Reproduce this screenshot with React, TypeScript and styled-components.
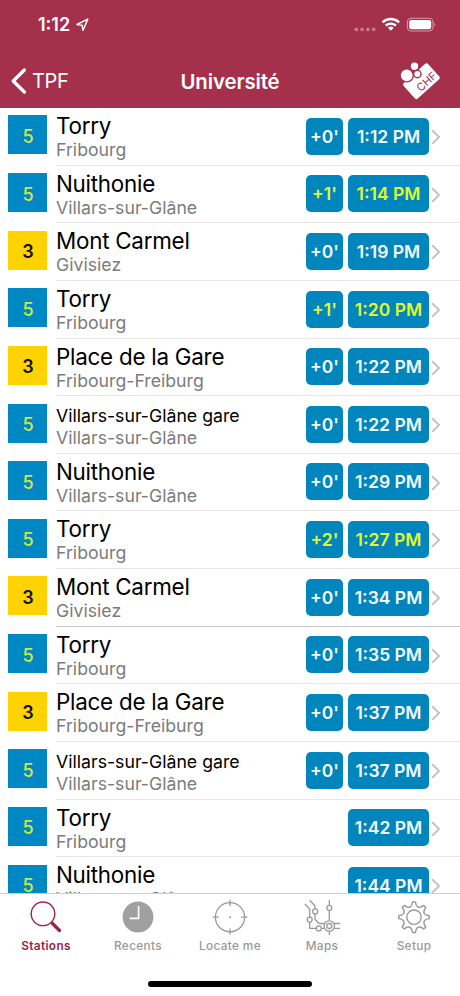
import React from "react";
import styled, { createGlobalStyle } from "styled-components";

const GlobalStyle = createGlobalStyle`
  * { box-sizing: border-box; }
  body { margin: 0; background: #fff; }
`;

const Screen = styled.div`
  width: 460px;
  height: 996px;
  overflow: hidden;
  display: flex;
  flex-direction: column;
  background: #fff;
  font-family: Inter, "Liberation Sans", sans-serif;
  color: #000;
`;

const Header = styled.header`
  height: 108px;
  flex: none;
  background: #a5304b;
  color: #fff;
`;

const StatusBar = styled.div`
  height: 50px;
  padding: 0 23px 0 38px;
  display: flex;
  align-items: center;
  justify-content: space-between;
`;

const Clock = styled.div`
  display: flex;
  align-items: center;
  gap: 6px;
  font-size: 18px;
  line-height: 20px;
  font-weight: 600;
  letter-spacing: 0;
`;

const StatusIcons = styled.div`
  display: flex;
  align-items: center;
`;

const NavBar = styled.div`
  height: 58px;
  padding: 4px 19px 0 10px;
  display: grid;
  grid-template-columns: 1fr auto 1fr;
  align-items: center;
`;

const BackButton = styled.div`
  display: flex;
  align-items: center;
  gap: 5px;
  font-size: 20px;
  letter-spacing: -0.3px;
`;

const NavTitle = styled.h1`
  margin: 2px 0 0 9px;
  font-size: 20.4px;
  line-height: 24px;
  font-weight: 600;
  letter-spacing: -0.1px;
`;

const NavAction = styled.div`
  display: flex;
  justify-content: flex-end;
`;

const List = styled.main`
  height: 785px;
  flex: none;
  overflow: hidden;
`;

const Row = styled.div`
  height: 57.63px;
  padding-left: 8px;
  display: flex;
`;

const LineBadge = styled.div<{ $yellow: boolean }>`
  width: 39px;
  height: 39px;
  margin: 7.4px 9px 0 0;
  flex: none;
  padding: 3px 0 0 1px;
  display: flex;
  align-items: center;
  justify-content: center;
  background: ${(p) => (p.$yellow ? "#ffd300" : "#0088c4")};
  color: ${(p) => (p.$yellow ? "#111" : "#d0e83a")};
  font-size: 18px;
  font-weight: ${(p) => (p.$yellow ? 600 : 500)};
`;

const RowBody = styled.div<{ $strong: boolean }>`
  flex: 1;
  display: flex;
  border-bottom: 1px solid ${(p) => (p.$strong ? "#c8c8c8" : "#e7e7e7")};
`;

const Names = styled.div`
  flex: 1;
  white-space: nowrap;
`;

const Destination = styled.div<{ $small: boolean }>`
  height: 27px;
  padding-top: ${(p) => (p.$small ? "6px" : "4px")};
  line-height: 27px;
  font-size: ${(p) => (p.$small ? "17.7px" : "22.4px")};
  letter-spacing: ${(p) => (p.$small ? "0" : "-0.25px")};
`;

const Town = styled.div`
  padding-top: 5px;
  line-height: 20px;
  font-size: 17.7px;
  letter-spacing: 0;
  color: #7c7c7c;
`;

const Times = styled.div`
  display: flex;
  gap: 5px;
  padding-top: 9.7px;
`;

const Pill = styled.div<{ $width: number; $late: boolean }>`
  width: ${(p) => p.$width}px;
  height: 37px;
  border-radius: 5px;
  display: flex;
  align-items: center;
  justify-content: center;
  white-space: nowrap;
  background: #0085bd;
  color: ${(p) => (p.$late ? "#e2fa2b" : "#f4fbff")};
  font-size: 17.5px;
  font-weight: 600;
`;

const Disclosure = styled.svg`
  width: 10px;
  height: 16px;
  margin: 21px 0 0 2px;
`;

const RowEnd = styled.div`
  width: 31px;
  display: flex;
`;

const TabBar = styled.nav`
  height: 103px;
  flex: none;
  border-top: 1px solid #cfcfcf;
  background: #fff;
  display: flex;
  flex-direction: column;
  align-items: center;
`;

const Tabs = styled.div`
  width: 100%;
  height: 87px;
  display: grid;
  grid-template-columns: repeat(5, 1fr);
`;

const Tab = styled.div<{ $active: boolean }>`
  display: flex;
  flex-direction: column;
  align-items: center;
  padding-top: 5px;
  color: ${(p) => (p.$active ? "#9b2547" : "#999")};
  font-size: 11.8px;
  line-height: 16px;
  font-weight: ${(p) => (p.$active ? 600 : 500)};
  letter-spacing: 0.35px;
  white-space: nowrap;
  svg { display: block; margin-bottom: 1px; }
`;

const HomeIndicator = styled.div`
  width: 164px;
  height: 6px;
  border-radius: 3px;
  background: #000;
`;

type Departure = { line: number; to: string; town: string; delay?: number; time: string; small?: boolean };

const departures: Departure[] = [
  { line: 5, to: "Torry", town: "Fribourg", delay: 0, time: "1:12 PM" },
  { line: 5, to: "Nuithonie", town: "Villars-sur-Glâne", delay: 1, time: "1:14 PM" },
  { line: 3, to: "Mont Carmel", town: "Givisiez", delay: 0, time: "1:19 PM" },
  { line: 5, to: "Torry", town: "Fribourg", delay: 1, time: "1:20 PM" },
  { line: 3, to: "Place de la Gare", town: "Fribourg-Freiburg", delay: 0, time: "1:22 PM" },
  { line: 5, to: "Villars-sur-Glâne gare", town: "Villars-sur-Glâne", delay: 0, time: "1:22 PM", small: true },
  { line: 5, to: "Nuithonie", town: "Villars-sur-Glâne", delay: 0, time: "1:29 PM" },
  { line: 5, to: "Torry", town: "Fribourg", delay: 2, time: "1:27 PM" },
  { line: 3, to: "Mont Carmel", town: "Givisiez", delay: 0, time: "1:34 PM" },
  { line: 5, to: "Torry", town: "Fribourg", delay: 0, time: "1:35 PM" },
  { line: 3, to: "Place de la Gare", town: "Fribourg-Freiburg", delay: 0, time: "1:37 PM" },
  { line: 5, to: "Villars-sur-Glâne gare", town: "Villars-sur-Glâne", delay: 0, time: "1:37 PM", small: true },
  { line: 5, to: "Torry", town: "Fribourg", time: "1:42 PM" },
  { line: 5, to: "Nuithonie", town: "Villars-sur-Glâne", time: "1:44 PM" },
];

const DepartureRow = ({ d, strong }: { d: Departure; strong: boolean }) => {
  const late = (d.delay ?? 0) > 0;
  return (
    <Row>
      <LineBadge $yellow={d.line === 3}>{d.line}</LineBadge>
      <RowBody $strong={strong}>
        <Names>
          <Destination $small={!!d.small}>{d.to}</Destination>
          <Town>{d.town}</Town>
        </Names>
        <Times>
          {d.delay !== undefined && (
            <Pill $width={37} $late={late}>{`+${d.delay}'`}</Pill>
          )}
          <Pill $width={81} $late={late}>{d.time}</Pill>
        </Times>
        <RowEnd>
          <Disclosure viewBox="0 0 10 16" fill="none" stroke="#c3c3c6" strokeWidth="2">
            <path d="M1.2 1.2 L8 8 L1.2 14.8" />
          </Disclosure>
        </RowEnd>
      </RowBody>
    </Row>
  );
};

const SearchIcon = () => (
  <svg width="36" height="38" viewBox="0 0 36 38" fill="none" stroke="currentColor">
    <circle cx="15" cy="14.8" r="11.8" strokeWidth="1.4" />
    <path d="M23 23 L25 25" strokeWidth="1.5" />
    <path d="M24.5 24.5 L31.5 31.5" strokeWidth="3.4" strokeLinecap="round" />
  </svg>
);

const ClockIcon = () => (
  <svg width="36" height="38" viewBox="0 0 36 38" fill="none">
    <circle cx="18" cy="18" r="15.4" fill="#a0a0a0" />
    <path d="M18.6 7 V19.4 H9.6" stroke="#fff" strokeWidth="1.6" />
  </svg>
);

const TargetIcon = () => (
  <svg width="36" height="38" viewBox="0 0 36 38" fill="none" stroke="currentColor" strokeWidth="1.3">
    <circle cx="18" cy="18.2" r="14.6" />
    <path d="M18 0.8 V7 M18 29.4 V35.6 M0.6 18.2 H6.8 M29.2 18.2 H35.4" />
    <circle cx="18" cy="18.2" r="1" fill="currentColor" stroke="none" />
  </svg>
);

const MapIcon = () => (
  <svg width="36" height="38" viewBox="0 0 36 38" fill="none" stroke="currentColor" strokeWidth="1.3">
    <path d="M0.8 5 L5.7 10 V18.2 M5.7 23 V29.4 H12 M17 29.4 H20.5 M5.8 1.2 L11 7 V10 M11 15 V20.5 L15.2 24.5 H21 M25.3 1 V6.4 M25.3 11.4 V21.2 M25.3 32.2 V36 M30 24.5 H36 M30 29.4 H36" />
    <circle cx="5.7" cy="20.6" r="2.5" />
    <circle cx="11.2" cy="12.4" r="2.5" />
    <circle cx="25.3" cy="8.8" r="2.5" />
    <circle cx="14.8" cy="29.4" r="2.5" />
    <circle cx="25.3" cy="27" r="5.2" />
    <circle cx="25.3" cy="27" r="2.5" />
  </svg>
);

// One cog tooth: flared base, narrow flat tip, centred on angle a.
const tooth = (a: number) => {
  const point = (r: number, deg: number) => {
    const t = ((a + deg) * Math.PI) / 180;
    return `${(18 + r * Math.sin(t)).toFixed(2)} ${(18.2 - r * Math.cos(t)).toFixed(2)}`;
  };
  return `${point(11, -19)} Q${point(12, -8)} ${point(15.3, -5.5)} L${point(15.3, 5.5)} Q${point(12, 8)} ${point(11, 19)}`;
};

const gearPath = `M${[0, 45, 90, 135, 180, 225, 270, 315].map(tooth).join(" L")} Z`;

const GearIcon = () => (
  <svg width="36" height="38" viewBox="0 0 36 38" fill="none" stroke="currentColor" strokeWidth="1.4" strokeLinejoin="round">
    <path d={gearPath} />
    <circle cx="18" cy="18.2" r="7.2" />
  </svg>
);

const LocationArrow = () => (
  <svg width="13" height="14" viewBox="0 0 13 14" fill="none" stroke="#fff" strokeWidth="1.5" strokeLinejoin="round">
    <path d="M1 6.5 L11.8 1.2 L7 12.3 L6 7.2 Z" />
  </svg>
);

const StatusGlyphs = () => (
  <svg width="84" height="16" viewBox="0 0 84 16" fill="none">
    <g fill="#c77a8b">
      <circle cx="3.3" cy="12.4" r="1.9" />
      <circle cx="9.1" cy="12.4" r="1.9" />
      <circle cx="14.9" cy="12.4" r="1.9" />
      <circle cx="20.7" cy="12.4" r="1.9" />
    </g>
    <g stroke="#fff" strokeWidth="2.4">
      <path d="M29.5 5.4 A12 12 0 0 1 46.1 5.4" />
      <path d="M32.7 8.7 A7.4 7.4 0 0 1 42.9 8.7" />
    </g>
    <path d="M34.9 10.8 A4.2 4.2 0 0 1 40.7 10.8 L37.8 13.7 Z" fill="#fff" />
    <rect x="54.4" y="1.2" width="25.6" height="12.8" rx="4" stroke="#d698a6" strokeWidth="1.1" />
    <rect x="56.2" y="3" width="22" height="9.2" rx="2.3" fill="#fff" />
    <path d="M81.4 5.6 Q83.2 7.6 81.4 9.6 Z" fill="#d698a6" />
  </svg>
);

const BackChevron = () => (
  <svg width="17" height="28" viewBox="0 0 17 28" fill="none" stroke="#fff" strokeWidth="3.3" strokeLinecap="round" strokeLinejoin="round">
    <path d="M14.4 3 L3.2 14 L14.4 25" />
  </svg>
);

const TicketIcon = () => (
  <svg width="41" height="40" viewBox="0 0 41 40">
    <g transform="translate(21.5 20.2) rotate(-42)">
      <rect x="-16.4" y="-10.4" width="32.8" height="20.8" rx="2" fill="#fff" />
      <text x="3.4" y="7.6" textAnchor="middle" fontFamily="Inter, sans-serif" fontSize="11" fill="#a5304b">CHF</text>
    </g>
    <g fill="#fff" stroke="#a5304b" strokeWidth="1.4">
      <circle cx="6.7" cy="14.3" r="6.6" />
      <circle cx="14.5" cy="5.2" r="4.4" />
      <circle cx="17.4" cy="13" r="3.7" />
    </g>
  </svg>
);

const tabs = [
  { label: "Stations", icon: <SearchIcon /> },
  { label: "Recents", icon: <ClockIcon /> },
  { label: "Locate me", icon: <TargetIcon /> },
  { label: "Maps", icon: <MapIcon /> },
  { label: "Setup", icon: <GearIcon /> },
];

export default function App() {
  return (
    <>
      <GlobalStyle />
      <Screen>
        <Header>
          <StatusBar>
            <Clock>1:12<LocationArrow /></Clock>
            <StatusIcons><StatusGlyphs /></StatusIcons>
          </StatusBar>
          <NavBar>
            <BackButton><BackChevron />TPF</BackButton>
            <NavTitle>Université</NavTitle>
            <NavAction><TicketIcon /></NavAction>
          </NavBar>
        </Header>
        <List>
          {departures.map((d, i) => (
            <DepartureRow key={i} d={d} strong={i === 8} />
          ))}
        </List>
        <TabBar>
          <Tabs>
            {tabs.map((t, i) => (
              <Tab key={t.label} $active={i === 0}>{t.icon}{t.label}</Tab>
            ))}
          </Tabs>
          <HomeIndicator />
        </TabBar>
      </Screen>
    </>
  );
}
